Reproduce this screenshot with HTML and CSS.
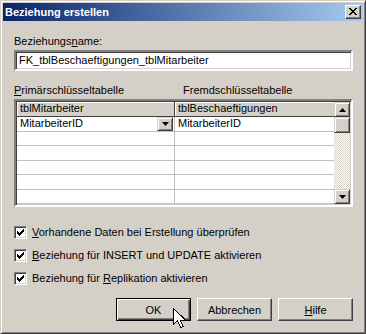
FILE: index.html
```html
<!DOCTYPE html>
<html lang="de">
	<head>
		<meta charset="UTF-8" />
		<title>Beziehung erstellen</title>
		<link rel="stylesheet" href="styles.css">
	</head>
	<body>
		<div class="window">
			<div class="titlebar">
				<span class="title">Beziehung erstellen</span>
				<button class="close-btn" aria-label="Schließen">
					<svg width="8" height="7" viewBox="0 0 8 7">
						<path d="M0 0h2v1h1v1h2v-1h1v-1h2v1h-1v1h-1v1h-1v1h1v1h1v1h1v1h-2v-1h-1v-1h-2v1h-1v1h-2v-1h1v-1h1v-1h1v-1h-1v-1h-1v-1h-1z" fill="#000"/>
					</svg>
				</button>
			</div>

			<div class="content">
				<div class="field-label">Beziehungs<u>n</u>ame:</div>
				<div class="textbox">FK_tblBeschaeftigungen_tblMitarbeiter</div>

				<div class="table-labels">
					<span class="col-label"><u>P</u>rimärschlüsseltabelle</span>
					<span class="col-label">Fremdschlüsseltabelle</span>
				</div>

				<div class="grid">
					<div class="grid-body">
						<div class="row header">
							<div class="cell first">tblMitarbeiter</div>
							<div class="cell second">tblBeschaeftigungen</div>
						</div>
						<div class="row">
							<div class="cell first">
								MitarbeiterID
								<span class="drop-btn">
									<svg width="7" height="4" viewBox="0 0 7 4"><path d="M0 0h7l-3.5 4z" fill="#000"/></svg>
								</span>
							</div>
							<div class="cell second">MitarbeiterID</div>
						</div>
						<div class="row"><div class="cell first"></div><div class="cell second"></div></div>
						<div class="row"><div class="cell first"></div><div class="cell second"></div></div>
						<div class="row"><div class="cell first"></div><div class="cell second"></div></div>
						<div class="row"><div class="cell first"></div><div class="cell second"></div></div>
						<div class="row"><div class="cell first"></div><div class="cell second"></div></div>
					</div>
					<div class="scrollbar">
						<span class="scroll-btn">
							<svg width="7" height="4" viewBox="0 0 7 4"><path d="M3.5 0l3.5 4h-7z" fill="#000"/></svg>
						</span>
						<span class="scroll-btn thumb"></span>
						<span class="scroll-track"></span>
						<span class="scroll-btn">
							<svg width="7" height="4" viewBox="0 0 7 4"><path d="M0 0h7l-3.5 4z" fill="#000"/></svg>
						</span>
					</div>
				</div>

				<div class="checks">
					<label class="check-row">
						<span class="checkbox"><svg width="7" height="7" viewBox="0 0 7 7"><path d="M0 2h1v1h1v1h1v-1h1v-1h1v-1h1v-1h1v3h-1v1h-1v1h-1v1h-1v1h-1v-1h-1v-1h-1z" fill="#000"/></svg></span>
						<span><u>V</u>orhandene Daten bei Erstellung überprüfen</span>
					</label>
					<label class="check-row">
						<span class="checkbox"><svg width="7" height="7" viewBox="0 0 7 7"><path d="M0 2h1v1h1v1h1v-1h1v-1h1v-1h1v-1h1v3h-1v1h-1v1h-1v1h-1v1h-1v-1h-1v-1h-1z" fill="#000"/></svg></span>
						<span><u>B</u>eziehung für INSERT und UPDATE aktivieren</span>
					</label>
					<label class="check-row">
						<span class="checkbox"><svg width="7" height="7" viewBox="0 0 7 7"><path d="M0 2h1v1h1v1h1v-1h1v-1h1v-1h1v-1h1v3h-1v1h-1v1h-1v1h-1v1h-1v-1h-1v-1h-1z" fill="#000"/></svg></span>
						<span>Beziehung für <u>R</u>eplikation aktivieren</span>
					</label>
				</div>

				<div class="buttons">
					<button class="btn default">OK</button>
					<button class="btn">Abbrechen</button>
					<button class="btn"><u>H</u>ilfe</button>
				</div>
			</div>

			<!-- mouse pointer over the OK button -->
			<svg class="cursor" width="12" height="20" viewBox="0 0 12 20">
				<path d="M0.5 0.5v16l4-4 3 7 2.5-1-3-6.5h5.5z" fill="#fff" stroke="#000" stroke-width="1" shape-rendering="crispEdges"/>
			</svg>
		</div>
	</body>
</html>
```

FILE: styles.css
```css
* {
	margin: 0;
	padding: 0;
	box-sizing: border-box;
}
body {
	background-color: #d4d0c8;
	font-family: "Liberation Sans", Arial, sans-serif;
	font-size: 11px;
	color: #000;
}
.window {
	position: relative;
	width: 366px;
	height: 334px;
	background-color: #d4d0c8;
	border: 1px solid;
	border-color: #d4d0c8 #404040 #404040 #d4d0c8;
	box-shadow: inset 1px 1px #fff, inset -1px -1px #808080;
	padding: 2px;
	overflow: hidden;
}
.titlebar {
	display: flex;
	align-items: center;
	justify-content: space-between;
	height: 18px;
	padding: 0 2px 0 2px;
	background: linear-gradient(to right, #0a246a, #a6caf0);
}
.title {
	color: #fff;
	font-weight: bold;
	font-size: 11px;
	line-height: 13px;
}
.close-btn {
	display: flex;
	align-items: center;
	justify-content: center;
	width: 16px;
	height: 14px;
	background-color: #d4d0c8;
	border: 1px solid;
	border-color: #fff #404040 #404040 #fff;
	box-shadow: inset -1px -1px #808080;
	padding-bottom: 1px;
}
.content {
	display: flex;
	flex-direction: column;
	padding: 14px 10px 0 11px;
	line-height: 13px;
}
u {
	text-decoration-thickness: 1px;
	text-underline-offset: 1px;
}
.textbox {
	margin-top: 2px;
	height: 21px;
	padding: 2px 3px;
	background-color: #fff;
	border: 2px solid;
	border-color: #808080 #fff #fff #808080;
	box-shadow: inset 1px 1px #404040, inset -1px -1px #d4d0c8;
	line-height: 13px;
	padding-left: 3px;
}
.table-labels {
	display: flex;
	margin-top: 13px;
}
.col-label:first-child {
	width: 169px;
}
.grid {
	display: flex;
	margin-top: 2px;
	height: 108px;
	border: 2px solid;
	border-color: #808080 #fff #fff #808080;
	box-shadow: inset 1px 1px #404040, inset -1px -1px #d4d0c8;
	padding: 1px 1px 1px 1px;
	background-color: #fff;
}
.grid-body {
	flex: 1;
	display: flex;
	flex-direction: column;
	margin: -1px 0 0 -1px;
	padding-top: 1px;
	padding-left: 1px;
}
.row {
	display: flex;
	height: 15px;
	border-bottom: 1px solid #c0c0c0;
}
.cell {
	display: flex;
	align-items: center;
	justify-content: space-between;
	padding: 0 1px 0 3px;
	line-height: 13px;
}
.cell.first {
	width: 158px;
	border-right: 1px solid #c0c0c0;
}
.cell.second {
	flex: 1;
}
.row.header {
	background-color: #d4d0c8;
	border-bottom: 1px solid #404040;
}
.row.header .cell {
	box-shadow: inset 1px 1px #fff;
}
.row.header .cell.first {
	border-right: 1px solid #404040;
}
.drop-btn {
	display: flex;
	align-items: center;
	justify-content: center;
	width: 16px;
	height: 14px;
	background-color: #d4d0c8;
	border: 1px solid;
	border-color: #d4d0c8 #404040 #404040 #d4d0c8;
	box-shadow: inset 1px 1px #fff, inset -1px -1px #808080;
}
.scrollbar {
	display: flex;
	flex-direction: column;
	width: 16px;
}
.scroll-btn {
	display: flex;
	align-items: center;
	justify-content: center;
	height: 15px;
	background-color: #d4d0c8;
	border: 1px solid;
	border-color: #d4d0c8 #404040 #404040 #d4d0c8;
	box-shadow: inset 1px 1px #fff, inset -1px -1px #808080;
}
.scroll-btn.thumb {
	height: 16px;
}
.scroll-track {
	flex: 1;
	background: repeating-conic-gradient(#d4d0c8 0 25%, #fff 0 50%) 0 0 / 2px 2px;
}
.checks {
	display: flex;
	flex-direction: column;
	gap: 10px;
	margin-top: 19px;
}
.check-row {
	display: flex;
	align-items: center;
	gap: 5px;
	height: 13px;
}
.checkbox {
	display: flex;
	align-items: center;
	justify-content: center;
	width: 13px;
	height: 13px;
	background-color: #fff;
	border: 1px solid;
	border-color: #808080 #fff #fff #808080;
	box-shadow: inset 1px 1px #404040, inset -1px -1px #d4d0c8;
}
.buttons {
	display: flex;
	justify-content: flex-end;
	gap: 6px;
	margin-top: 13px;
}
.btn {
	width: 75px;
	height: 23px;
	font-family: inherit;
	font-size: 11px;
	background-color: #d4d0c8;
	border: 1px solid;
	border-color: #fff #404040 #404040 #fff;
	box-shadow: inset -1px -1px #808080, inset 1px 1px #d4d0c8;
}
.btn.default {
	border: 1px solid #000;
	box-shadow: inset 1px 1px #fff, inset -1px -1px #404040, inset -2px -2px #808080;
}
.cursor {
	position: absolute;
	left: 172px;
	top: 307px;
}
```
